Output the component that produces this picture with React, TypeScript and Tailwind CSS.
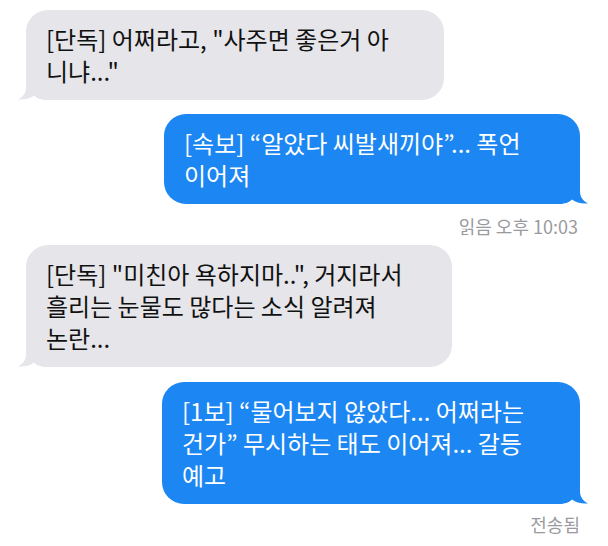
const FONT = { fontFamily: '"Noto Sans CJK KR", "Noto Sans", sans-serif' };

function Tail({ side, color }: { side: "left" | "right"; color: string }) {
  const pos = side === "left" ? "-left-[8px]" : "-right-[8px] -scale-x-100";
  return (
    <svg
      className={`absolute bottom-0 ${pos}`}
      width="30"
      height="26"
      viewBox="0 0 30 26"
    >
      <path
        d="M8 0 L8 13 C8 19 5 23 0 25.5 C7 26 12 24.5 16 21.5 C19 24.5 23 26 30 26 L30 0 Z"
        fill={color}
      />
    </svg>
  );
}

function Bubble({
  lines,
  mine,
  width,
}: {
  lines: string[];
  mine?: boolean;
  width: string;
}) {
  const color = mine ? "#1c86f2" : "#e5e5ea";
  return (
    <div
      className={`relative ${width} rounded-[22px] px-5 py-[13px] text-[24px] leading-[32px] whitespace-nowrap ${
        mine ? "bg-[#1c86f2] text-white" : "bg-[#e5e5ea] text-[#111]"
      }`}
    >
      <Tail side={mine ? "right" : "left"} color={color} />
      <div className="relative">
        {lines.map((l, i) => (
          <div key={i}>{l}</div>
        ))}
      </div>
    </div>
  );
}

export default function App() {
  return (
    <div className="w-[608px] h-[546px] bg-white overflow-hidden" style={FONT}>
      <div className="flex flex-col pt-[10px] pl-[26px] pr-[28px]">
        <div className="flex justify-start">
          <Bubble
            width="w-[418px]"
            lines={['[단독] 어쩌라고, "사주면 좋은거 아', '니냐..."']}
          />
        </div>
        <div className="flex justify-end mt-[14px]">
          <Bubble
            mine
            width="w-[416px]"
            lines={["[속보] “알았다 씨발새끼야”... 폭언", "이어져"]}
          />
        </div>
        <div className="flex justify-end mt-[12px] pr-[2px] text-[18px] leading-[20px] text-[#9a9a9e]">
          읽음 오후 10:03
        </div>
        <div className="flex justify-start mt-[9px]">
          <Bubble
            width="w-[426px]"
            lines={[
              '[단독] "미친아 욕하지마..", 거지라서',
              "흘리는 눈물도 많다는 소식 알려져",
              "논란...",
            ]}
          />
        </div>
        <div className="flex justify-end mt-[15px]">
          <Bubble
            mine
            width="w-[418px]"
            lines={[
              "[1보] “물어보지 않았다... 어쩌라는",
              "건가” 무시하는 태도 이어져... 갈등",
              "예고",
            ]}
          />
        </div>
        <div className="flex justify-end mt-[10px] text-[18px] leading-[20px] text-[#9a9a9e]">
          전송됨
        </div>
      </div>
    </div>
  );
}
